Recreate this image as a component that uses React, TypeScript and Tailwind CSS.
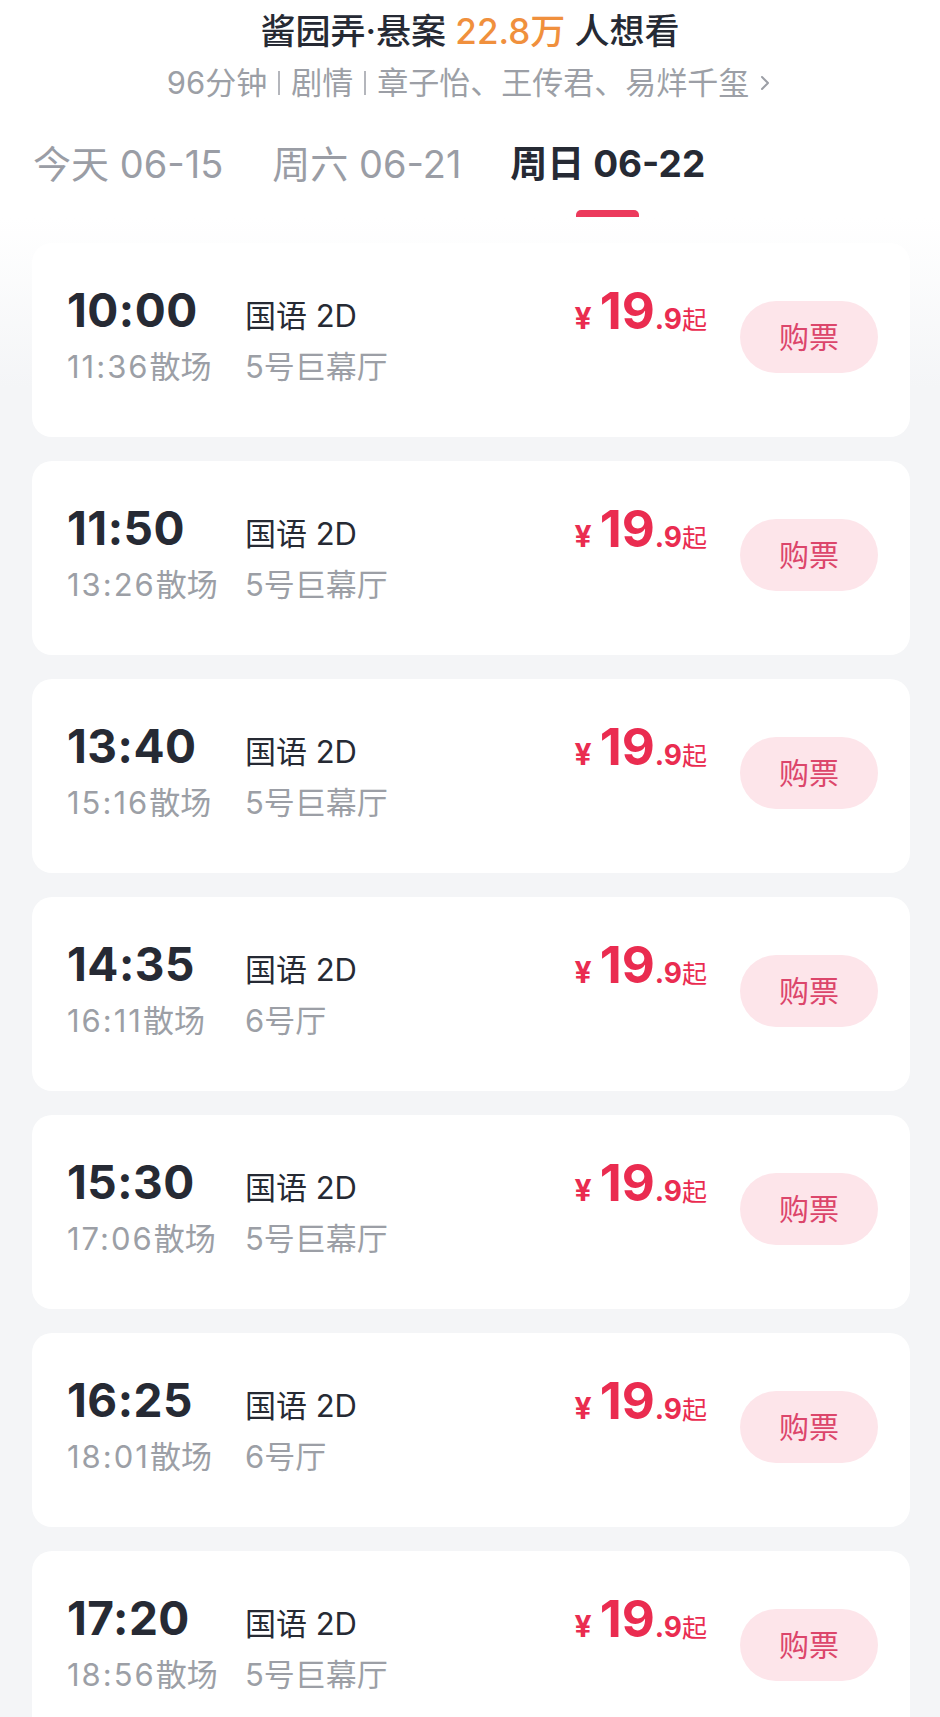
import React from 'react';

interface Showtime {
  start: string;
  end: string;
  hall: string;
}

const showtimes: Showtime[] = [
  { start: '10:00', end: '11:36', hall: '5号巨幕厅' },
  { start: '11:50', end: '13:26', hall: '5号巨幕厅' },
  { start: '13:40', end: '15:16', hall: '5号巨幕厅' },
  { start: '14:35', end: '16:11', hall: '6号厅' },
  { start: '15:30', end: '17:06', hall: '5号巨幕厅' },
  { start: '16:25', end: '18:01', hall: '6号厅' },
  { start: '17:20', end: '18:56', hall: '5号巨幕厅' },
];

const tabs = [
  { day: '今天', date: '06-15', active: false },
  { day: '周六', date: '06-21', active: false },
  { day: '周日', date: '06-22', active: true },
];

const ShowtimeCard: React.FC<{ show: Showtime }> = ({ show }) => (
  <div className="h-[194px] shrink-0 rounded-[20px] bg-white flex items-start pl-[35px] pr-[32px]">
    {/* time + hall */}
    <div className="flex-1 pt-[42px]">
      <div className="flex items-baseline h-[50px] leading-[50px]">
        <span className="w-[178px] text-[46px] font-bold text-[#262a34] tracking-[0.5px]">{show.start}</span>
        <span className="text-[31px] text-[#262a34]">国语 2D</span>
      </div>
      <div className="flex mt-[12px] h-[40px] leading-[40px] text-[31px] text-[#9c9fa6]">
        <span className="w-[178px]">
          <span className="tracking-[2px]">{show.end}</span>散场
        </span>
        <span>{show.hall}</span>
      </div>
    </div>

    {/* price */}
    <div className="flex items-baseline pt-[43px] leading-[50px] text-[#ea2c50] mr-[33px]">
      <span className="text-[30px] font-bold mr-[8px]">¥</span>
      <span className="text-[51px] font-bold">19</span>
      <span className="text-[28px] font-bold">.9</span>
      <span className="text-[25px]">起</span>
    </div>

    {/* buy button */}
    <button className="mt-[58px] w-[138px] h-[72px] rounded-full bg-[#fde5ea] text-[30px] text-[#dc466b] flex items-center justify-center">
      购票
    </button>
  </div>
);

export default function App() {
  return (
    <div className="w-[940px] h-[1717px] overflow-hidden bg-[#f4f5f7] font-['Inter','Noto_Sans_CJK_SC',sans-serif]">
      {/* Header */}
      <div className="bg-white">
        <div className="pt-[11px] text-center text-[35px] leading-[40px] font-medium text-[#262a34]">
          酱园弄·悬案 <span className="text-[#f0903d]">22.8万</span> 人想看
        </div>
        <div className="mt-[14px] flex items-center justify-center text-[31px] leading-[36px] text-[#9c9fa6]">
          <span>96分钟</span>
          <span className="mx-[11px] w-[2px] h-[24px] bg-[#b4b6bc]" />
          <span>剧情</span>
          <span className="mx-[11px] w-[2px] h-[24px] bg-[#b4b6bc]" />
          <span>章子怡、王传君、易烊千玺</span>
          <svg className="ml-[8px] w-[16px] h-[24px]" viewBox="0 0 16 24" fill="none">
            <path d="M5 6 L11 12 L5 18" stroke="#9c9fa6" strokeWidth="2" strokeLinecap="round" strokeLinejoin="round" />
          </svg>
        </div>

        {/* Date tabs */}
        <div className="mt-[41px] flex gap-[49px] pl-[33px]">
          {tabs.map((t) => (
            <div key={t.date} className="flex flex-col items-center">
              <div
                className={`leading-[44px] ${
                  t.active ? 'text-[37px] font-bold text-[#262a34]' : 'text-[38px] text-[#9a9da5]'
                }`}
              >
                {t.day} {t.date}
              </div>
              <div
                className={`mt-[24px] w-[63px] h-[7px] rounded-t-[5px] ${
                  t.active ? 'bg-[#ec3a5c]' : 'bg-transparent'
                }`}
              />
            </div>
          ))}
        </div>
      </div>

      {/* Showtimes */}
      <div className="bg-[linear-gradient(to_bottom,#ffffff_0px,#f4f5f7_170px)] px-[32px] pr-[30px] pt-[26px] flex flex-col gap-[24px]">
        {showtimes.map((s) => (
          <ShowtimeCard key={s.start} show={s} />
        ))}
      </div>
    </div>
  );
}
